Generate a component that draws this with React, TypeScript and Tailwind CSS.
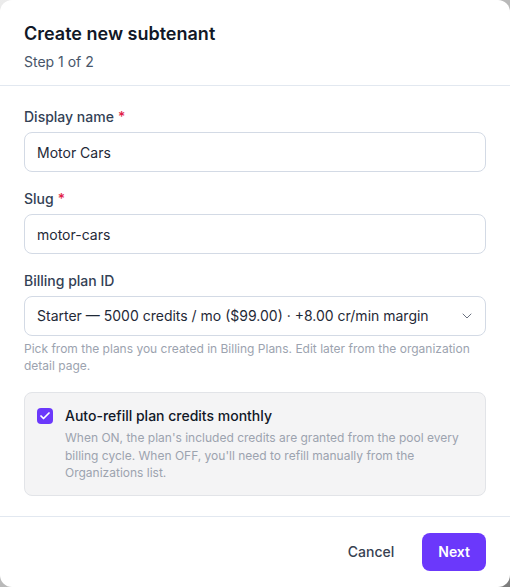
import React, { useState } from 'react';
import { ChevronDown, Check } from 'lucide-react';

const Field = ({ label, required, children }: { label: string; required?: boolean; children: React.ReactNode }) => (
    <div className="flex flex-col">
        <label className="text-sm leading-5 font-medium text-[#334155] mb-[5px]">
            {label}
            {required && <span className="text-[#e11d48] ml-1">*</span>}
        </label>
        {children}
    </div>
);

const App: React.FC = () => {
    const [name, setName] = useState('Motor Cars');
    const [slug, setSlug] = useState('motor-cars');
    const [autoRefill, setAutoRefill] = useState(true);

    return (
        <div
            className="w-[510px] h-[587px] bg-gradient-to-br from-[#ececec] via-[#b9b9b9] to-[#7d7d7d]"
            style={{ fontFamily: 'Inter, "Noto Sans", sans-serif' }}
        >
            <div className="w-full h-full bg-white rounded-xl flex flex-col">
                {/* header */}
                <div className="px-6 pt-5 pb-[13px] border-b border-[#e2e8f0]">
                    <h2 className="text-lg leading-7 font-semibold text-[#111827]">Create new subtenant</h2>
                    <p className="mt-1 text-sm leading-5 text-[#475569]">Step 1 of 2</p>
                </div>

                {/* body */}
                <div className="flex-1 px-6 pt-[21px] flex flex-col gap-[17px]">
                    <Field label="Display name" required>
                        <input
                            value={name}
                            onChange={(e) => setName(e.target.value)}
                            className="h-10 w-full rounded-lg border border-[#d3dae5] px-3 text-sm text-[#1f2937] outline-none"
                        />
                    </Field>
                    <Field label="Slug" required>
                        <input
                            value={slug}
                            onChange={(e) => setSlug(e.target.value)}
                            className="h-10 w-full rounded-lg border border-[#d3dae5] px-3 text-sm text-[#1f2937] outline-none"
                        />
                    </Field>
                    <div className="flex flex-col">
                        <Field label="Billing plan ID">
                            <button className="h-10 w-full rounded-lg border border-[#d3dae5] pl-3 pr-[10px] flex items-center justify-between text-sm text-[#1f2937]">
                                <span>Starter — 5000 credits / mo ($99.00) · +8.00 cr/min margin</span>
                                <ChevronDown className="w-4 h-4 text-[#6b7280]" strokeWidth={1.5} />
                            </button>
                        </Field>
                        <p className="mt-1 text-xs leading-[17px] text-[#9ca3af]">
                            Pick from the plans you created in Billing Plans. Edit later from the organization detail page.
                        </p>
                    </div>

                    <label className="mt-[1px] flex gap-3 rounded-lg border border-[#e2e4e8] bg-[#f4f4f5] px-3 py-[13px] cursor-pointer">
                        <button
                            onClick={() => setAutoRefill(!autoRefill)}
                            className="mt-[2px] w-4 h-4 shrink-0 rounded-[4px] bg-[#6b38fb] flex items-center justify-center"
                        >
                            {autoRefill && <Check className="w-3 h-3 text-white" strokeWidth={3.5} />}
                        </button>
                        <div>
                            <div className="text-sm leading-5 font-medium text-[#111827]">Auto-refill plan credits monthly</div>
                            <p className="mt-[3px] text-xs leading-[17.5px] text-[#9ca3af]">
                                When ON, the plan's included credits are granted from the pool every billing cycle. When OFF, you'll need to refill manually from the Organizations list.
                            </p>
                        </div>
                    </label>
                </div>

                {/* footer */}
                <div className="border-t border-[#e2e8f0] px-6 py-4 flex justify-end items-center gap-3">
                    <button className="h-[38px] px-4 text-sm font-medium text-[#374151]">Cancel</button>
                    <button className="h-[38px] px-4 rounded-lg bg-[#6b38fb] text-sm font-semibold text-white">Next</button>
                </div>
            </div>
        </div>
    );
};

export default App;
